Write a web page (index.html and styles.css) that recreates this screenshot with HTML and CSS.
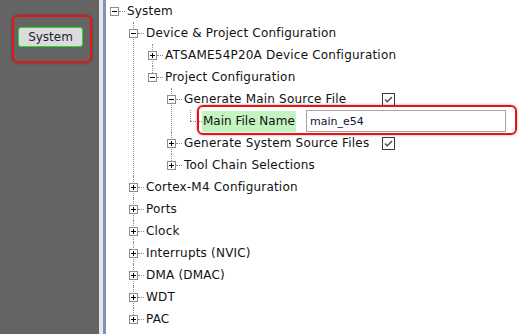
FILE: index.html
```html
<!DOCTYPE html>
<html>
<head>
<meta charset="utf-8">
<link rel="stylesheet" href="styles.css">
</head>
<body>
<div class="app">
  <aside class="side">
    <button class="sys-btn">System</button>
    <div class="mark mark-side"></div>
  </aside>
  <div class="divider"></div>
  <main class="pane">
    <ul class="tree">
      <li>
        <div class="row"><span class="tog minus"></span><span class="conn"></span><span class="lbl">System</span></div>
        <ul class="children">
          <li>
            <div class="row"><span class="tog minus"></span><span class="conn"></span><span class="lbl">Device &amp; Project Configuration</span></div>
            <ul class="children">
              <li><div class="row"><span class="tog plus"></span><span class="conn"></span><span class="lbl">ATSAME54P20A Device Configuration</span></div></li>
              <li>
                <div class="row"><span class="tog minus"></span><span class="conn"></span><span class="lbl">Project Configuration</span></div>
                <ul class="children">
                  <li>
                    <div class="row"><span class="tog minus"></span><span class="conn"></span><span class="lbl fixed">Generate Main Source File</span><span class="chk"><svg width="13" height="13" viewBox="0 0 13 13"><rect x="0.5" y="0.5" width="12" height="12" fill="#fff" stroke="#3a3a3a"/><polyline points="3,6.5 5.3,8.8 10,4" fill="none" stroke="#4a4a4a" stroke-width="1.4"/></svg></span></div>
                    <ul class="children">
                      <li class="leaf"><div class="row"><span class="conn long"></span><span class="lbl green">Main File Name</span><input class="field" type="text" value="main_e54"></div>
                        <div class="mark mark-row"></div>
                      </li>
                    </ul>
                  </li>
                  <li><div class="row"><span class="tog plus"></span><span class="conn"></span><span class="lbl fixed">Generate System Source Files</span><span class="chk"><svg width="13" height="13" viewBox="0 0 13 13"><rect x="0.5" y="0.5" width="12" height="12" fill="#fff" stroke="#3a3a3a"/><polyline points="3,6.5 5.3,8.8 10,4" fill="none" stroke="#4a4a4a" stroke-width="1.4"/></svg></span></div></li>
                  <li><div class="row"><span class="tog plus"></span><span class="conn"></span><span class="lbl">Tool Chain Selections</span></div></li>
                </ul>
              </li>
            </ul>
          </li>
          <li><div class="row"><span class="tog plus"></span><span class="conn"></span><span class="lbl">Cortex-M4 Configuration</span></div></li>
          <li><div class="row"><span class="tog plus"></span><span class="conn"></span><span class="lbl">Ports</span></div></li>
          <li><div class="row"><span class="tog plus"></span><span class="conn"></span><span class="lbl">Clock</span></div></li>
          <li><div class="row"><span class="tog plus"></span><span class="conn"></span><span class="lbl">Interrupts (NVIC)</span></div></li>
          <li><div class="row"><span class="tog plus"></span><span class="conn"></span><span class="lbl">DMA (DMAC)</span></div></li>
          <li><div class="row"><span class="tog plus"></span><span class="conn"></span><span class="lbl">WDT</span></div></li>
          <li><div class="row"><span class="tog plus"></span><span class="conn"></span><span class="lbl">PAC</span></div></li>
        </ul>
      </li>
    </ul>
  </main>
</div>
</body>
</html>
```
FILE: styles.css
```css
html, body {
  margin: 0;
  padding: 0;
  background: #fff;
}
body {
  font-family: "DejaVu Sans", Verdana, sans-serif;
  font-size: 12px;
  color: #111;
}
.app {
  display: flex;
  width: 531px;
  height: 334px;
  overflow: hidden;
}
.side {
  position: relative;
  width: 99px;
  flex: none;
  background: #646464;
  padding: 27px 0 0 18px;
  box-sizing: border-box;
}
.sys-btn {
  display: block;
  width: 65px;
  height: 20px;
  margin: 0;
  padding: 0;
  box-sizing: border-box;
  border: 1px solid #22dd22;
  border-radius: 3px;
  background: #dcdcdc;
  font-family: "DejaVu Sans", Verdana, sans-serif;
  font-size: 12px;
  color: #1c1c3c;
  line-height: 17px;
}
.mark {
  position: absolute;
  border: 2px solid #ee1111;
  border-radius: 6px;
  box-shadow: 0 0 3px rgba(0, 0, 0, 0.35);
  box-sizing: border-box;
  pointer-events: none;
}
.mark-side {
  left: 12px;
  top: 15px;
  width: 80px;
  height: 48px;
}
.divider {
  flex: none;
  width: 7px;
  background: linear-gradient(to right, #e2e6ec 0, #e2e6ec 4px, #7f94b3 4px, #7f94b3 7px);
}
.pane {
  flex: 1;
  position: relative;
  padding-left: 4px;
}
.tree, .children {
  list-style: none;
  margin: 0;
  padding: 0;
}
.children {
  margin-left: 19px;
}
.children > li {
  position: relative;
}
.children > li::before {
  content: "";
  position: absolute;
  left: 4px;
  top: 0;
  height: 100%;
  border-left: 1px dotted #8c8c8c;
}
.children > li:last-child::before {
  height: 11px;
}
.row {
  position: relative;
  display: flex;
  align-items: center;
  height: 22px;
}
.tog {
  position: relative;
  z-index: 1;
  flex: none;
  width: 9px;
  height: 9px;
  box-sizing: border-box;
  border: 1px solid #8c8c8c;
  background: #fff;
}
.tog::before {
  content: "";
  position: absolute;
  left: 1px;
  top: 3px;
  width: 5px;
  height: 1px;
  background: #000;
}
.tog.plus::after {
  content: "";
  position: absolute;
  left: 3px;
  top: 1px;
  width: 1px;
  height: 5px;
  background: #000;
}
.conn {
  flex: none;
  width: 6px;
  height: 0;
  border-top: 1px dotted #8c8c8c;
  margin-right: 2px;
  align-self: center;
  margin-top: 1px;
}
.conn.long {
  margin-left: 4px;
  width: 12px;
  margin-right: 0;
}
.lbl {
  white-space: nowrap;
  line-height: 22px;
  letter-spacing: 0.2px;
}
.lbl.fixed {
  width: 198px;
  flex: none;
}
.lbl.green {
  background: #c4f5c0;
  height: 21px;
  line-height: 21px;
  width: 94px;
  padding-left: 1px;
  box-sizing: border-box;
  letter-spacing: 0;
}
.chk {
  display: flex;
  width: 13px;
  height: 13px;
}
.field {
  margin: 0 0 0 10px;
  width: 200px;
  height: 22px;
  box-sizing: border-box;
  border: 1px solid #a4a4a4;
  padding: 0 0 0 3px;
  font-family: "DejaVu Sans", Verdana, sans-serif;
  font-size: 11px;
  color: #10103a;
  outline: none;
}
.leaf {
  position: relative;
}
.mark-row {
  left: 11px;
  top: -5px;
  width: 320px;
  height: 30px;
}
```
